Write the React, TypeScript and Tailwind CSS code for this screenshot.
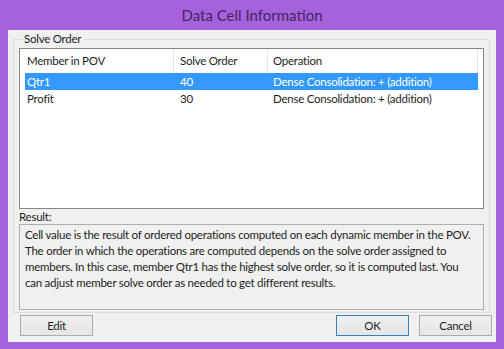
import React from "react";

const font = { fontFamily: 'Lato, "Noto Sans", sans-serif' };

function Btn({ label, primary }: { label: string; primary?: boolean }) {
  return (
    <div
      className={
        "w-[73px] h-[21px] flex items-center justify-center text-[11.5px] tracking-[-0.25px] text-[#1e1e1e] bg-gradient-to-b from-[#f0f0f0] to-[#e5e5e5] border " +
        (primary ? "border-[#3c7fb1]" : "border-[#acacac]")
      }
    >
      {label}
    </div>
  );
}

export default function App() {
  const rows = [
    { m: "Qtr1", s: "40", o: "Dense Consolidation: + (addition)", sel: true },
    { m: "Profit", s: "30", o: "Dense Consolidation: + (addition)", sel: false },
  ];
  return (
    <div className="w-[504px] h-[349px] bg-[#a463dc] flex flex-col overflow-hidden" style={font}>
      <div className="h-[30px] flex items-center justify-center text-[15px] text-[#43245f]">
        Data Cell Information
      </div>
      <div className="mx-[8px] h-[312px] bg-[#f0f0f0] flex flex-col text-[11.5px] tracking-[-0.25px]">
        <fieldset className="ml-[5px] mt-[2px] w-[477px] h-[281px] border border-[#dcdcdc] px-[5px] pb-[3px] flex flex-col">
          <legend className="ml-[3px] px-[2px] text-[#1e1e1e] leading-[14px]">Solve Order</legend>
          <div className="mt-[2px] h-[161px] bg-white border border-[#828790] text-[#1e1e1e]">
            <div className="h-[24px] flex items-center">
              <div className="w-[154px] h-full pl-[7px] flex items-center border-r border-[#e5e5e5]">Member in POV</div>
              <div className="w-[94px] h-full pl-[6px] flex items-center border-r border-[#e5e5e5]">Solve Order</div>
              <div className="w-[210px] h-full pl-[5px] flex items-center border-r border-[#e5e5e5]">Operation</div>
            </div>
            {rows.map((r) => (
              <div
                key={r.m}
                className={
                  "ml-[5px] w-[453px] h-[17px] flex items-center " +
                  (r.sel ? "bg-[#3399ff] text-white" : "")
                }
              >
                <div className="w-[149px] pl-[2px]">{r.m}</div>
                <div className="w-[94px] pl-[6px]">{r.s}</div>
                <div className="pl-[5px]">{r.o}</div>
              </div>
            ))}
          </div>
          <div className="h-[15px] text-[#1e1e1e] leading-[15px]">Result:</div>
          <div className="h-[86px] border border-[#abadb3] bg-[#f0f0f0] px-[5px] pt-[2px] leading-[16px] text-[#1e1e1e]">
            Cell value is the result of ordered operations computed on each dynamic member in the POV. The order in which the operations are computed depends on the solve order assigned to members. In this case, member Qtr1 has the highest solve order, so it is computed last. You can adjust member solve order as needed to get different results.
          </div>
        </fieldset>
        <div className="mt-[2px] flex items-center pl-[12px] pr-[4px]">
          <Btn label="Edit" />
          <div className="flex-1" />
          <Btn label="OK" primary />
          <div className="w-[10px]" />
          <Btn label="Cancel" />
        </div>
      </div>
    </div>
  );
}
